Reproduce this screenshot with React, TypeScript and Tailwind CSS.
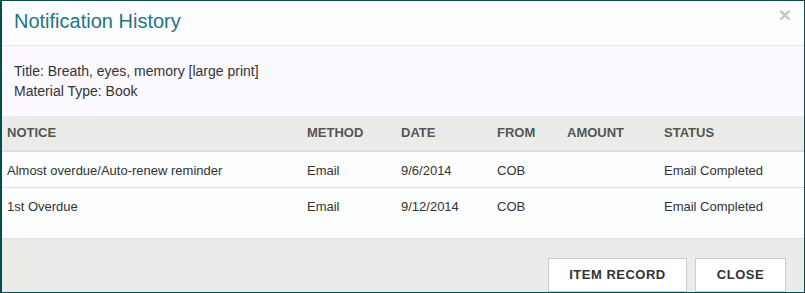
const rows = [
  { notice: "Almost overdue/Auto-renew reminder", method: "Email", date: "9/6/2014", from: "COB", amount: "", status: "Email Completed" },
  { notice: "1st Overdue", method: "Email", date: "9/12/2014", from: "COB", amount: "", status: "Email Completed" },
];

const cols = "grid grid-cols-[300px_94px_96px_70px_97px_1fr]";

export default function App() {
  return (
    <div className="w-[805px] h-[293px] overflow-hidden border border-l-2 border-[#0b4a47] flex flex-col font-['Liberation_Sans',Arial,sans-serif] text-[#333]">

      <div className="h-[45px] shrink-0 flex justify-between items-start bg-[#fcfefd] border-b border-[#e5e5e5]">
        <h1 className="pl-[12px] pt-[6px] text-[20px] leading-[28px] text-[#237582]">
          Notification History
        </h1>
        <span className="mt-[3px] mr-[13px] text-[21px] leading-none font-bold text-[#c6c6c6]">
          ×
        </span>
      </div>

      <div className="h-[70px] shrink-0 bg-[#fbf9fd] pl-[12px] pt-[15px] text-[14px] leading-[20px]">
        <p>Title: Breath, eyes, memory [large print]</p>
        <p>Material Type: Book</p>
      </div>

      <div className="shrink-0 bg-[#fcfefd] text-[13px]">
        <div className={`${cols} bg-[#ebecea] border-b-2 border-[#dddddd] font-bold text-[#555] leading-[18px]`}>
          <span className="pl-[5px] py-[8px]">NOTICE</span>
          <span className="pl-[5px] py-[8px]">METHOD</span>
          <span className="pl-[5px] py-[8px]">DATE</span>
          <span className="pl-[5px] py-[8px]">FROM</span>
          <span className="pl-[5px] py-[8px]">AMOUNT</span>
          <span className="pl-[5px] py-[8px]">STATUS</span>
        </div>

        {rows.map((r, i) => (
          <div
            key={r.notice}
            className={`${cols} leading-[19px] ${i === 0 ? "border-b border-[#dddddd]" : ""}`}
          >
            <span className="pl-[5px] pt-[9px] pb-[7px]">{r.notice}</span>
            <span className="pl-[5px] pt-[9px] pb-[7px]">{r.method}</span>
            <span className="pl-[5px] pt-[9px] pb-[7px]">{r.date}</span>
            <span className="pl-[5px] pt-[9px] pb-[7px]">{r.from}</span>
            <span className="pl-[5px] pt-[9px] pb-[7px]">{r.amount}</span>
            <span className="pl-[5px] pt-[9px] pb-[7px]">{r.status}</span>
          </div>
        ))}

        <div className="h-[15px]" />
      </div>

      <div className="flex-1 bg-[#ebecea] border-t border-[#e0e0e0] flex justify-end items-start gap-[8px] pt-[19px] pr-[18px]">
        <button className="w-[139px] shrink-0 bg-white border border-[#cccccc] py-[6px] text-[13px] leading-[20px] font-bold tracking-[0.5px] text-[#333]">
          ITEM RECORD
        </button>
        <button className="w-[91px] shrink-0 bg-white border border-[#cccccc] py-[6px] text-[13px] leading-[20px] font-bold tracking-[0.5px] text-[#333]">
          CLOSE
        </button>
      </div>

    </div>
  );
}
